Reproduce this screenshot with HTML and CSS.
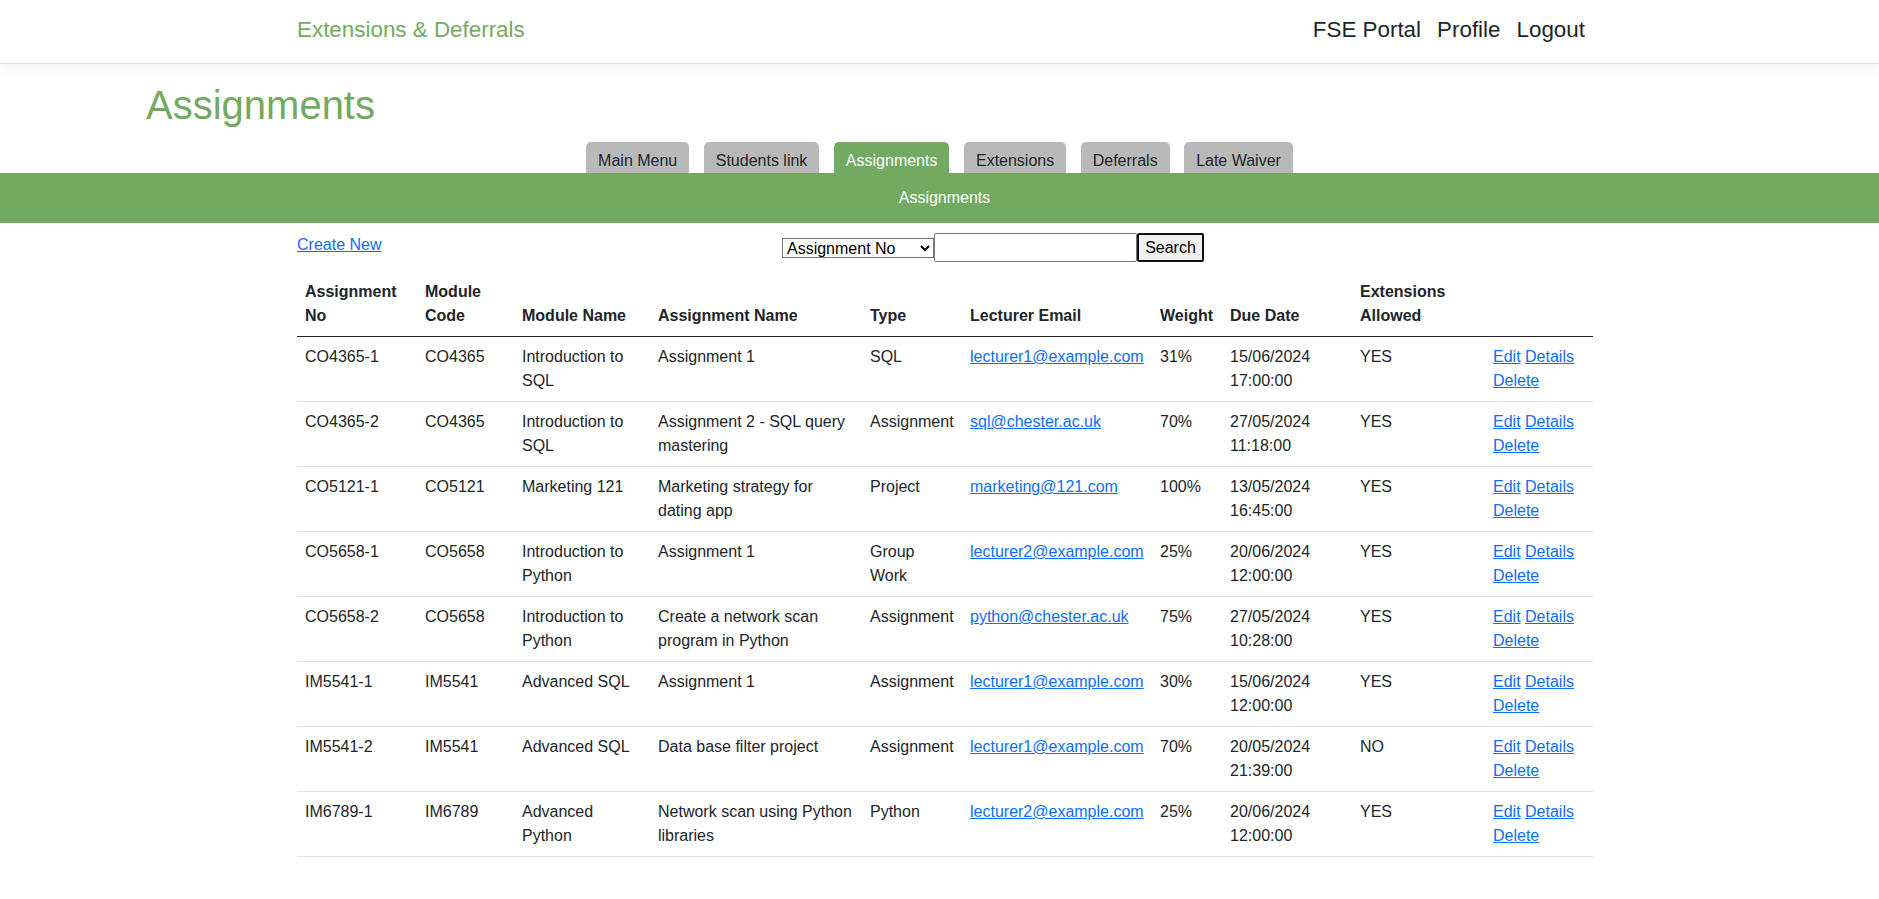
FILE: index.html
```html
<!DOCTYPE html>
<html lang="en">
<head>
<meta charset="utf-8">
<title>Assignments - Extensions &amp; Deferrals</title>
<link rel="stylesheet" href="styles.css">
</head>
<body>
<header class="navbar">
  <div class="nav-inner">
    <a class="brand" href="#">Extensions &amp; Deferrals</a>
    <nav class="nav-links">
      <a href="#">FSE Portal</a>
      <a href="#">Profile</a>
      <a href="#">Logout</a>
    </nav>
  </div>
</header>
<main>
  <h1 class="page-title">Assignments</h1>
  <div class="tabs">
    <a class="tab" href="#">Main Menu</a>
    <a class="tab" href="#">Students link</a>
    <a class="tab active" href="#">Assignments</a>
    <a class="tab" href="#">Extensions</a>
    <a class="tab" href="#">Deferrals</a>
    <a class="tab" href="#">Late Waiver</a>
  </div>
  <div class="band">Assignments</div>
  <div class="container">
    <div class="toolbar">
      <a class="link" href="#">Create New</a>
      <form class="search">
        <select class="search-select">
          <option>Assignment No</option>
          <option>Module Code</option>
          <option>Module Name</option>
        </select>
        <input class="search-input" type="text">
        <button class="search-btn" type="button">Search</button>
      </form>
    </div>
    <table class="table">
      <colgroup>
        <col class="c1"><col class="c2"><col class="c3"><col class="c4"><col class="c5">
        <col class="c6"><col class="c7"><col class="c8"><col class="c9"><col class="c10">
      </colgroup>
      <thead>
        <tr>
          <th>Assignment No</th>
          <th>Module Code</th>
          <th>Module Name</th>
          <th>Assignment Name</th>
          <th>Type</th>
          <th>Lecturer Email</th>
          <th>Weight</th>
          <th>Due Date</th>
          <th>Extensions Allowed</th>
          <th></th>
        </tr>
      </thead>
      <tbody>
        <tr>
          <td>CO4365-1</td><td>CO4365</td><td>Introduction to SQL</td><td>Assignment 1</td><td>SQL</td>
          <td><a class="link" href="#">lecturer1@example.com</a></td><td>31%</td><td>15/06/2024 17:00:00</td><td>YES</td>
          <td><a class="link" href="#">Edit</a> <a class="link" href="#">Details</a> <a class="link" href="#">Delete</a></td>
        </tr>
        <tr>
          <td>CO4365-2</td><td>CO4365</td><td>Introduction to SQL</td><td>Assignment 2 - SQL query mastering</td><td>Assignment</td>
          <td><a class="link" href="#">sql@chester.ac.uk</a></td><td>70%</td><td>27/05/2024 11:18:00</td><td>YES</td>
          <td><a class="link" href="#">Edit</a> <a class="link" href="#">Details</a> <a class="link" href="#">Delete</a></td>
        </tr>
        <tr>
          <td>CO5121-1</td><td>CO5121</td><td>Marketing 121</td><td>Marketing strategy for dating app</td><td>Project</td>
          <td><a class="link" href="#">marketing@121.com</a></td><td>100%</td><td>13/05/2024 16:45:00</td><td>YES</td>
          <td><a class="link" href="#">Edit</a> <a class="link" href="#">Details</a> <a class="link" href="#">Delete</a></td>
        </tr>
        <tr>
          <td>CO5658-1</td><td>CO5658</td><td>Introduction to Python</td><td>Assignment 1</td><td>Group Work</td>
          <td><a class="link" href="#">lecturer2@example.com</a></td><td>25%</td><td>20/06/2024 12:00:00</td><td>YES</td>
          <td><a class="link" href="#">Edit</a> <a class="link" href="#">Details</a> <a class="link" href="#">Delete</a></td>
        </tr>
        <tr>
          <td>CO5658-2</td><td>CO5658</td><td>Introduction to Python</td><td>Create a network scan program in Python</td><td>Assignment</td>
          <td><a class="link" href="#">python@chester.ac.uk</a></td><td>75%</td><td>27/05/2024 10:28:00</td><td>YES</td>
          <td><a class="link" href="#">Edit</a> <a class="link" href="#">Details</a> <a class="link" href="#">Delete</a></td>
        </tr>
        <tr>
          <td>IM5541-1</td><td>IM5541</td><td>Advanced SQL</td><td>Assignment 1</td><td>Assignment</td>
          <td><a class="link" href="#">lecturer1@example.com</a></td><td>30%</td><td>15/06/2024 12:00:00</td><td>YES</td>
          <td><a class="link" href="#">Edit</a> <a class="link" href="#">Details</a> <a class="link" href="#">Delete</a></td>
        </tr>
        <tr>
          <td>IM5541-2</td><td>IM5541</td><td>Advanced SQL</td><td>Data base filter project</td><td>Assignment</td>
          <td><a class="link" href="#">lecturer1@example.com</a></td><td>70%</td><td>20/05/2024 21:39:00</td><td>NO</td>
          <td><a class="link" href="#">Edit</a> <a class="link" href="#">Details</a> <a class="link" href="#">Delete</a></td>
        </tr>
        <tr>
          <td>IM6789-1</td><td>IM6789</td><td>Advanced Python</td><td>Network scan using Python libraries</td><td>Python</td>
          <td><a class="link" href="#">lecturer2@example.com</a></td><td>25%</td><td>20/06/2024 12:00:00</td><td>YES</td>
          <td><a class="link" href="#">Edit</a> <a class="link" href="#">Details</a> <a class="link" href="#">Delete</a></td>
        </tr>
      </tbody>
    </table>
  </div>
</main>
</body>
</html>
```
FILE: styles.css
```css
html, body {
  margin: 0;
  padding: 0;
  background: #fff;
}
body {
  font-family: "Liberation Sans", Arial, sans-serif;
  font-size: 16px;
  line-height: 24px;
  color: #212529;
}

/* Navbar */
.navbar {
  height: 63px;
  border-bottom: 1px solid #dee2e6;
  box-shadow: 0 4px 12px rgba(0, 0, 0, 0.05);
  background: #fff;
}
.nav-inner {
  width: 1296px;
  margin-left: calc(50% - 642.5px);
  display: flex;
  justify-content: space-between;
  align-items: flex-start;
  padding-top: 13px;
  font-size: 22.4px;
  line-height: 33.6px;
}
.brand {
  color: #73aa62;
  text-decoration: none;
}
.nav-links {
  display: flex;
}
.nav-links a {
  color: #212529;
  text-decoration: none;
  padding: 0 8px;
}

/* Page title */
.page-title {
  margin: 17px 0 0 146px;
  font-size: 40px;
  line-height: 48px;
  font-weight: 400;
  color: #73aa62;
}

/* Tabs */
.tabs {
  display: flex;
  justify-content: center;
  align-items: flex-end;
  gap: 14.5px;
  margin-top: 13px;
}
.tab {
  display: block;
  height: 31px;
  box-sizing: border-box;
  padding: 7px 12px 0;
  line-height: 24px;
  background: #b9b9b9;
  color: #212529;
  text-decoration: none;
  border-radius: 5px 5px 0 0;
}
.tab.active {
  background: #73aa62;
  color: #fff;
}

/* Green band */
.band {
  background: #73aa62;
  color: #fff;
  text-align: center;
  padding: 13px 0 13px 10px;
  line-height: 24px;
}

/* Content */
.container {
  width: 1296px;
  margin-left: calc(50% - 642.5px);
}
.toolbar {
  display: flex;
  align-items: flex-start;
  margin-top: 10px;
}
.link {
  color: #0d6efd;
  text-decoration: underline;
}
.search {
  display: flex;
  align-items: center;
  margin: 0 0 0 400.5px;
}
.search-select {
  width: 152px;
  height: 20px;
  box-sizing: border-box;
  font-family: "Liberation Sans", Arial, sans-serif;
  font-size: 16px;
  padding: 0;
  border: 1px solid #767676;
  border-radius: 0;
  background: #fff;
  color: #000;
}
.search-input {
  width: 203px;
  height: 29px;
  box-sizing: border-box;
  border: 1px solid #767676;
  border-radius: 2px;
  padding: 1px 2px;
  font-size: 16px;
  font-family: "Liberation Sans", Arial, sans-serif;
}
.search-btn {
  width: 67px;
  height: 29px;
  box-sizing: border-box;
  border: 2px solid #101010;
  border-radius: 2px;
  background: #efefef;
  color: #000;
  font-size: 16px;
  font-family: "Liberation Sans", Arial, sans-serif;
  padding: 0;
}

/* Table */
.table {
  width: 1296px;
  margin-top: 10px;
  border-collapse: collapse;
  table-layout: fixed;
}
.c1 { width: 120px; }
.c2 { width: 97px; }
.c3 { width: 136px; }
.c4 { width: 212px; }
.c5 { width: 100px; }
.c6 { width: 190px; }
.c7 { width: 70px; }
.c8 { width: 130px; }
.c9 { width: 133px; }
.c10 { width: 108px; }

.table th {
  text-align: left;
  font-weight: 700;
  vertical-align: bottom;
  padding: 8px;
  border-bottom: 1px solid #212529;
}
.table td {
  vertical-align: top;
  padding: 8px;
  border-bottom: 1px solid #dee2e6;
}
```
